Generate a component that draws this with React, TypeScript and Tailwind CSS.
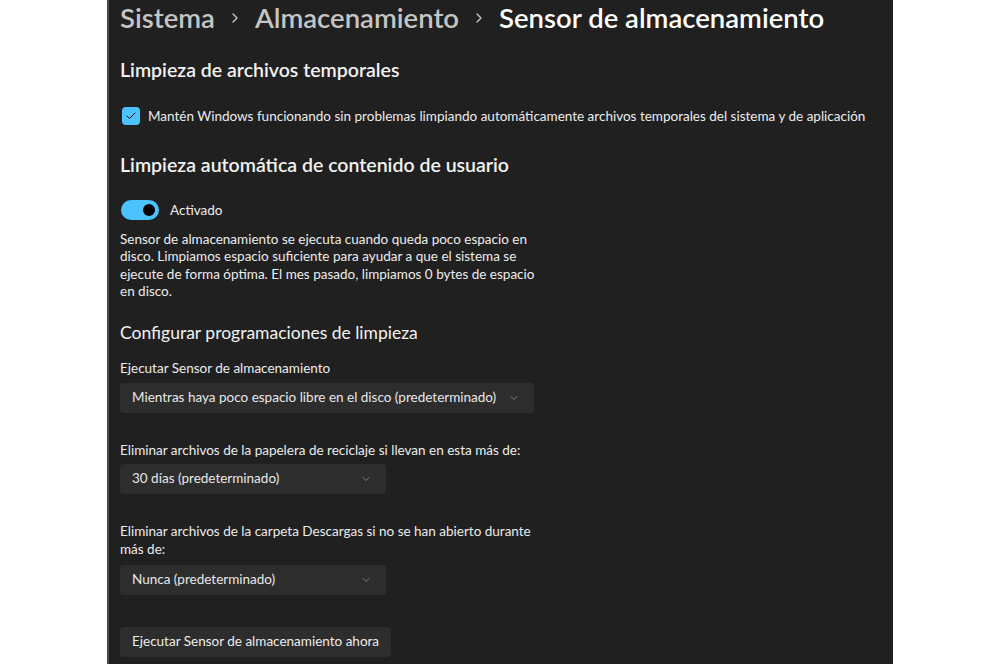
import { ChevronRight, ChevronDown, Check } from 'lucide-react';

const font = { fontFamily: 'Lato, "Noto Sans", sans-serif' };

function Select({ label, width }: { label: string; width: string }) {
  return (
    <div className={`flex h-[30px] ${width} items-center justify-between rounded-[4px] bg-[#2d2d2d] pl-3 pr-[14px] text-[13.5px] text-[#e8e8e8]`}>
      <span className="whitespace-nowrap">{label}</span>
      <ChevronDown className="h-3 w-3 text-[#9a9a9a]" strokeWidth={1.5} />
    </div>
  );
}

export default function App() {
  return (
    <div className="flex h-[664px] w-[1000px] bg-white" style={font}>
      <div className="w-[107px]" />
      <main className="flex w-[786px] flex-col overflow-hidden border-l-2 border-[#4a4a4a] bg-[#202020] pl-[11px] text-[#ececec]">
        <div className="flex h-[36px] items-center text-[27.5px] leading-none">
          <span className="font-semibold text-[#c5c5c5]">Sistema</span>
          <ChevronRight className="mx-[12px] h-4 w-4 text-[#c5c5c5]" strokeWidth={2} />
          <span className="font-semibold text-[#c5c5c5]">Almacenamiento</span>
          <ChevronRight className="mx-[12px] h-4 w-4 text-[#c5c5c5]" strokeWidth={2} />
          <span className="font-semibold text-white">Sensor de almacenamiento</span>
        </div>

        <h2 className="mt-[22px] text-[19.5px] font-semibold leading-6 text-[#f2f2f2]">Limpieza de archivos temporales</h2>

        <label className="mt-[24px] flex items-center gap-[8px] text-[13.5px]">
          <span className="ml-[2px] flex h-[18px] w-[18px] items-center justify-center rounded-[4px] bg-[#4cc2ff]">
            <Check className="h-3 w-3 text-black" strokeWidth={2} />
          </span>
          <span>Mantén Windows funcionando sin problemas limpiando automáticamente archivos temporales del sistema y de aplicación</span>
        </label>

        <h2 className="mt-[27px] text-[19.5px] font-semibold leading-6 text-[#f2f2f2]">Limpieza automática de contenido de usuario</h2>

        <div className="mt-[23px] flex items-center gap-[11px] text-[13.5px]">
          <span className="ml-[1px] flex h-[20px] w-[38px] items-center justify-end rounded-full bg-[#4cc2ff] pr-[4px]">
            <span className="h-[12px] w-[12px] rounded-full bg-black" />
          </span>
          <span>Activado</span>
        </div>

        <p className="mt-[10px] w-[420px] text-[13.5px] leading-[17.5px]">
          Sensor de almacenamiento se ejecuta cuando queda poco espacio en disco. Limpiamos espacio suficiente para ayudar a que el sistema se ejecute de forma óptima. El mes pasado, limpiamos 0 bytes de espacio en disco.
        </p>

        <h3 className="mt-[20px] text-[17.5px] leading-6 text-[#f2f2f2]">Configurar programaciones de limpieza</h3>

        <div className="mt-[14px] text-[13.5px] leading-[18px]">Ejecutar Sensor de almacenamiento</div>
        <div className="mt-[6px]">
          <Select label="Mientras haya poco espacio libre en el disco (predeterminado)" width="w-[414px]" />
        </div>

        <div className="mt-[28px] text-[13.5px] leading-[18px]">Eliminar archivos de la papelera de reciclaje si llevan en esta más de:</div>
        <div className="mt-[5px]">
          <Select label="30 días (predeterminado)" width="w-[266px]" />
        </div>

        <div className="mt-[28px] w-[420px] text-[13.5px] leading-[18px]">Eliminar archivos de la carpeta Descargas si no se han abierto durante más de:</div>
        <div className="mt-[7px]">
          <Select label="Nunca (predeterminado)" width="w-[266px]" />
        </div>

        <div className="mt-[32px]">
          <button className="h-[30px] rounded-[4px] bg-[#2d2d2d] px-3 text-[13.5px] text-[#ececec]">Ejecutar Sensor de almacenamiento ahora</button>
        </div>
      </main>
      <div className="flex-1" />
    </div>
  );
}
